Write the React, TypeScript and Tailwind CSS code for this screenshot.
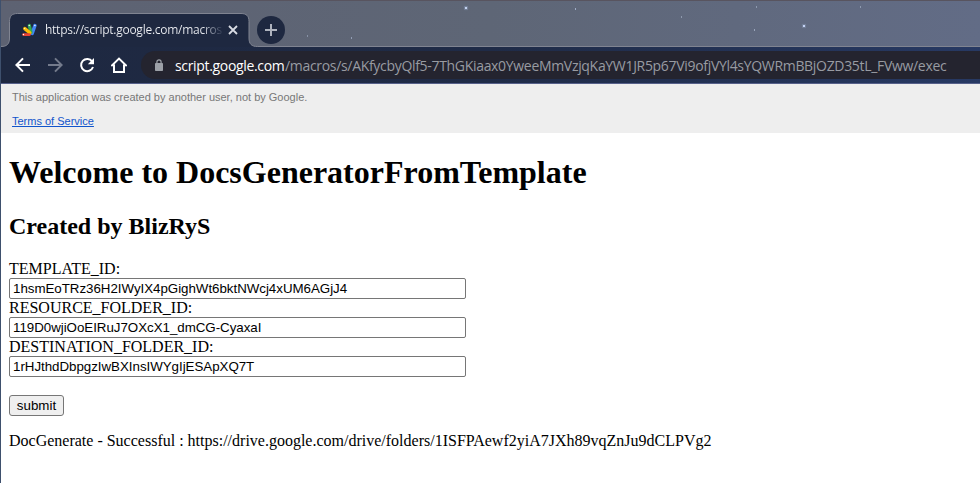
const stars = [
  { x: 307, y: 35, c: '#8791a5' },
  { x: 351, y: 37, c: '#929db4' },
  { x: 465, y: 7, c: '#c3d2ee', big: true },
  { x: 575, y: 8, c: '#a0acc6' },
  { x: 681, y: 16, c: '#8e99ad' },
  { x: 756, y: 6, c: '#8e9ab0' },
  { x: 754, y: 29, c: '#9aa5bb' },
  { x: 803, y: 25, c: '#c3d2f4', big: true },
  { x: 860, y: 6, c: '#8e9ab0' },
];

const fields = [
  { label: 'TEMPLATE_ID:', value: '1hsmEoTRz36H2IWyIX4pGighWt6bktNWcj4xUM6AGjJ4' },
  { label: 'RESOURCE_FOLDER_ID:', value: '119D0wjiOoEIRuJ7OXcX1_dmCG-CyaxaI' },
  { label: 'DESTINATION_FOLDER_ID:', value: '1rHJthdDbpgzIwBXInsIWYgIjESApXQ7T' },
];

function ScriptLogo() {
  return (
    <svg width="16" height="16" viewBox="0 0 16 16" className="shrink-0" strokeLinecap="round" fill="none">
      <path d="M13.900 3.600L11.200 11.500" stroke="#4285f4" strokeWidth="3.400" />
      <path d="M8.300 3.500L10 10.500" stroke="#34a853" strokeWidth="3.200" />
      <path d="M3.800 6.600L8.800 10.800" stroke="#fbbc04" strokeWidth="3.400" />
      <path d="M2.600 12.600H8.500" stroke="#ea4335" strokeWidth="2.900" />
      <g fill="#fff">
        <circle cx="2.500" cy="12.500" r=".7" />
        <circle cx="3.700" cy="6.500" r=".6" />
        <circle cx="8.200" cy="3.500" r=".7" />
        <circle cx="13.900" cy="3.500" r=".7" />
      </g>
    </svg>
  );
}

function TabStrip() {
  return (
    <div className="relative flex h-[47px] items-end border-t border-[#58545f] bg-linear-to-r from-[#5d6272] via-[#5e6676] to-[#626c86]">
      <div className="absolute inset-x-0 bottom-0 h-px bg-[#808491]" />
      {stars.map((s) => (
        <span
          key={s.x}
          className={s.big ? 'absolute size-[2px] shadow-[0_0_1px_1px_#75819a]' : 'absolute h-[2px] w-px'}
          style={{ left: s.x - 1, top: s.y - 1, background: s.c }}
        />
      ))}
      <div className="relative h-[34px] w-[258px] shrink-0">
        <svg className="absolute inset-0" width="258" height="34" viewBox="0 0 258 34">
          <path
            d="M0 34V33.500C6 33.500 8.500 31 8.500 25V8.500C8.500 3 11 .5 16.500 .5H240C245.500 .5 248 3 248 8.500V25C248 31 250.500 33.500 256.500 33.500V34Z"
            fill="#1e2840"
          />
          <path
            d="M0 33.500C6 33.500 8.500 31 8.500 25V8.500C8.500 3 11 .5 16.500 .5H240C245.500 .5 248 3 248 8.500V25C248 31 250.500 33.500 256.500 33.500"
            fill="none"
            stroke="#808491"
          />
        </svg>
        <div className="relative flex h-full items-center pl-5">
          <ScriptLogo />
          <span className="ml-2 w-[178px] bg-linear-to-r from-[#eef0f4] from-88% to-[#2b354d] bg-clip-text font-['Open_Sans',sans-serif] text-[12px] leading-[18px] tracking-[-0.26px] whitespace-nowrap text-transparent">
            https://script.google.com/macros
          </span>
          <svg className="ml-[5px]" width="10" height="10" viewBox="0 0 10 10" stroke="#d9dce4" strokeWidth="1.800">
            <path d="M1 1l8 8M9 1l-8 8" />
          </svg>
        </div>
      </div>
      <div className="relative mb-[3px] -ml-[2px] flex size-7 items-center justify-center rounded-full bg-[#1e2840]">
        <svg width="12" height="12" viewBox="0 0 12 12" stroke="#aeb3be" strokeWidth="2">
          <path d="M6 0v12M0 6h12" />
        </svg>
      </div>
    </div>
  );
}

function Toolbar() {
  return (
    <div className="flex h-[37px] items-center border-b border-[#56608a] bg-linear-to-r from-[#1e2840] via-[#1f2b47] to-[#273963] pl-[14px]">
      <svg width="16" height="16" viewBox="0 0 16 16" fill="none" stroke="#fff" strokeWidth="2">
        <path d="M15 8H2M8 1.400L1.400 8L8 14.600" />
      </svg>
      <svg className="ml-4" width="16" height="16" viewBox="0 0 16 16" fill="none" stroke="#747b8c" strokeWidth="2">
        <path d="M1 8H14M8 1.400L14.600 8L8 14.600" />
      </svg>
      <svg className="ml-4" width="16" height="16" viewBox="0 0 16 16" fill="none">
        <path d="M13.200 4.500A6.100 6.100 0 1 0 14 10" stroke="#fff" strokeWidth="2" />
        <path d="M15 1v6.200H8.800Z" fill="#fff" />
      </svg>
      <svg className="ml-4" width="16" height="16" viewBox="0 0 16 16" fill="none" stroke="#fff" strokeWidth="2">
        <path d="M.3 9L8 1.600L15.700 9M3 7.500V15H13V7.500" />
      </svg>
      <div className="ml-[14px] flex h-7 flex-1 items-center rounded-l-full bg-[#24242f] pl-[14px]">
        <svg width="8" height="12" viewBox="0 0 8 12" className="mb-px">
          <rect y="4" width="8" height="8" rx=".8" fill="#9ca0a7" />
          <path d="M1.900 4.500V2.900a2.100 2.100 0 0 1 4.200 0V4.500" fill="none" stroke="#9ca0a7" strokeWidth="1.200" />
        </svg>
        <span className="ml-3 flex font-['Open_Sans',sans-serif] text-[14px] whitespace-nowrap">
          <span className="w-[110px] shrink-0 tracking-[-0.33px] text-white">script.google.com</span>
          <span className="tracking-[-0.315px] text-[#989ba2]">
            /macros/s/AKfycbyQlf5-7ThGKiaax0YweeMmVzjqKaYW1JR5p67Vi9ofjVYl4sYQWRmBBjOZD35tL_FVww/exec
          </span>
        </span>
      </div>
    </div>
  );
}

export default function App() {
  return (
    <div className="h-[483px] overflow-hidden border-l border-[#3e506d] bg-white">
      <TabStrip />
      <Toolbar />
      <div className="h-[49px] bg-[#eee] pt-[7px] pl-[11px] font-['Liberation_Sans',Arial,sans-serif] text-[11px] leading-[13px] text-[#777]">
        <p>This application was created by another user, not by Google.</p>
        <a href="#terms" className="mt-[11px] block w-fit text-[#15c] underline">
          Terms of Service
        </a>
      </div>
      <main className="pt-[21px] pl-2 font-['Liberation_Serif','Times_New_Roman',serif] text-base leading-[18px] text-black">
        <h1 className="text-[32px] leading-[37px] font-bold">Welcome to DocsGeneratorFromTemplate</h1>
        <h2 className="mt-[21px] mb-5 text-2xl leading-[28px] font-bold">Created by BlizRyS</h2>
        <form>
          {fields.map((f) => (
            <label key={f.label} className="block">
              <span className="block h-[18px]">{f.label}</span>
              <input
                readOnly
                value={f.value}
                className="block h-[21px] w-[457px] rounded-[2px] border border-[#767676] bg-white px-[3px] font-['Liberation_Sans',Arial,sans-serif] text-[13.333px] tracking-[-0.03px]"
              />
            </label>
          ))}
          <button
            type="button"
            className="mt-[18px] block h-[21px] w-[55px] rounded-[3px] border border-[#767676] bg-[#efefef] font-['Liberation_Sans',Arial,sans-serif] text-[13.333px] leading-[15px]"
          >
            submit
          </button>
        </form>
        <p className="mt-4">DocGenerate - Successful : https://drive.google.com/drive/folders/1ISFPAewf2yiA7JXh89vqZnJu9dCLPVg2</p>
      </main>
    </div>
  );
}
